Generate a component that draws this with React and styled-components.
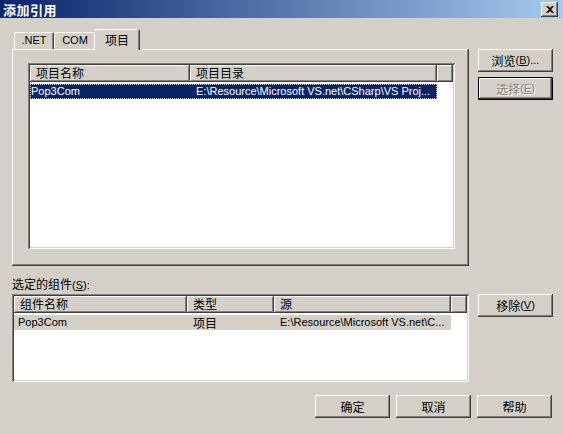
import React from "react";
import styled, { createGlobalStyle, css } from "styled-components";

const GlobalStyle = createGlobalStyle`
  html, body {
    margin: 0;
    padding: 0;
    background: #d4d0c8;
  }
  * {
    box-sizing: border-box;
  }
`;

const CJK = `"Noto Sans CJK SC", sans-serif`;
const LATIN = `"Liberation Sans", "Noto Sans CJK SC", sans-serif`;

const raised = css`
  box-shadow: inset -1px -1px #404040, inset 1px 1px #ffffff,
    inset -2px -2px #808080, inset 2px 2px #d4d0c8;
`;

const sunken = css`
  box-shadow: inset 1px 1px #808080, inset -1px -1px #ffffff,
    inset 2px 2px #404040, inset -2px -2px #d4d0c8;
`;

const Dialog = styled.div`
  width: 563px;
  height: 434px;
  background: #d4d0c8;
  font-family: ${LATIN};
  font-size: 11px;
  color: #000;
  overflow: hidden;
`;

const TitleBar = styled.div`
  height: 18px;
  display: flex;
  align-items: center;
  padding: 0 5px 0 3px;
  background: linear-gradient(to right, #0a246a, #a6caf0);
`;

const Title = styled.span`
  font-family: ${CJK};
  font-weight: bold;
  font-size: 13px;
  color: #fff;
  letter-spacing: 0.5px;
`;

const CloseBtn = styled.div`
  margin-left: auto;
  width: 17px;
  height: 15px;
  background: #d4d0c8;
  ${raised};
  display: flex;
  align-items: center;
  justify-content: center;
`;

const Body = styled.div`
  display: grid;
  grid-template-columns: 457px 75px;
  column-gap: 9px;
  padding: 12px 0 0 12px;
`;

const TabStrip = styled.div`
  height: 19px;
  display: flex;
  align-items: flex-end;
  padding-left: 2px;
  position: relative;
  z-index: 1;
`;

const Tab = styled.div`
  width: ${(p) => p.$w}px;
  height: ${(p) => (p.$active ? 21 : 17)}px;
  margin: ${(p) => (p.$active ? "0 -2px -1px -2px" : "0")};
  background: #d4d0c8;
  border-radius: 2px 2px 0 0;
  box-shadow: inset 1px 1px #ffffff, inset -1px 0 #404040, inset -2px 0 #808080;
  font-family: ${(p) => (p.$cjk ? CJK : LATIN)};
  font-size: ${(p) => (p.$cjk ? 12 : 11)}px;
  display: flex;
  justify-content: center;
  padding-top: 2px;
`;

const Panel = styled.div`
  height: 217px;
  padding: 14px 14px 17px 16px;
  ${raised};
`;

const ButtonStack = styled.div`
  display: flex;
  flex-direction: column;
  gap: 5px;
  align-self: start;
`;

const Button = styled.div`
  width: 75px;
  height: 23px;
  background: #d4d0c8;
  ${raised};
  ${(p) =>
    p.$default &&
    css`
      box-shadow: inset 0 0 0 1px #000, inset -2px -2px #404040,
        inset 2px 2px #ffffff, inset -3px -3px #808080;
    `}
  display: flex;
  align-items: center;
  justify-content: center;
  font-family: ${CJK};
  font-size: 12px;
  color: ${(p) => (p.$disabled ? "#808080" : "#000")};
  text-shadow: ${(p) => (p.$disabled ? "1px 1px #ffffff" : "none")};
  padding-bottom: 1px;
`;

const Small = styled.span`
  font-family: ${LATIN};
  font-size: 11px;
`;

const Key = styled.span`
  text-decoration: underline;
`;

const Label = styled.div`
  grid-column: 1;
  margin-top: 10px;
  margin-bottom: 2px;
  height: 16px;
  line-height: 16px;
  font-family: ${CJK};
  font-size: 12px;
`;

const ListBox = styled.div`
  height: ${(p) => p.$h}px;
  background: #fff;
  padding: 2px;
  ${sunken};
`;

const HeaderRow = styled.div`
  display: flex;
  height: 17px;
`;

const HeaderCell = styled.div`
  width: ${(p) => (p.$w ? `${p.$w}px` : "auto")};
  flex: ${(p) => (p.$w ? "none" : 1)};
  background: #d4d0c8;
  box-shadow: inset -1px -1px #404040, inset 1px 1px #ffffff,
    inset -2px -2px #808080;
  font-family: ${CJK};
  font-size: 12px;
  line-height: 16px;
  padding-left: 6px;
  white-space: nowrap;
`;

const Row = styled.div`
  display: flex;
  width: max-content;
  height: 15px;
  margin-top: 2px;
  align-items: center;
  background: ${(p) =>
    p.$focus ? "#0a246a" : p.$selected ? "#d4d0c8" : "transparent"};
  color: ${(p) => (p.$focus ? "#fff" : "#000")};
  outline: ${(p) => (p.$focus ? "1px dotted #c8c8a0" : "none")};
  outline-offset: -1px;
`;

const Cell = styled.div`
  width: ${(p) => p.$w}px;
  padding-left: ${(p) => p.$pad}px;
  white-space: nowrap;
  font-family: ${(p) => (p.$cjk ? CJK : LATIN)};
  font-size: ${(p) => (p.$cjk ? 12 : 11)}px;
  line-height: 15px;
`;

const Footer = styled.div`
  grid-column: 1 / -1;
  margin-top: 13px;
  padding-right: 1px;
  display: flex;
  justify-content: flex-end;
  gap: 6px;
`;

const projectCols = [160, 247];
const componentCols = [173, 87, 177];

function ListView({ height, cols, headers, rows }) {
  return (
    <ListBox $h={height}>
      <HeaderRow>
        {headers.map((h, i) => (
          <HeaderCell key={h} $w={cols[i]}>
            {h}
          </HeaderCell>
        ))}
        <HeaderCell />
      </HeaderRow>
      {rows.map((r, i) => (
        <Row key={i} $focus={r.focus} $selected={r.selected}>
          {r.cells.map((c, j) => (
            <Cell key={j} $w={cols[j]} $pad={j === 0 ? r.firstPad : 6} $cjk={/[\u4e00-\u9fff]/.test(c)}>
              {c}
            </Cell>
          ))}
        </Row>
      ))}
    </ListBox>
  );
}

export default function App() {
  return (
    <>
      <GlobalStyle />
      <Dialog>
        <TitleBar>
          <Title>添加引用</Title>
          <CloseBtn>
            <svg width="8" height="7" viewBox="0 0 8 7">
              <path d="M0 0h2l2 2 2-2h2L5 3.5 8 7H6L4 5 2 7H0l3-3.5z" fill="#000" />
            </svg>
          </CloseBtn>
        </TitleBar>
        <Body>
          <TabStrip>
            <Tab $w={40}>.NET</Tab>
            <Tab $w={42}>COM</Tab>
            <Tab $w={46} $active $cjk>
              项目
            </Tab>
          </TabStrip>
          <div />
          <Panel>
            <ListView
              height={186}
              cols={projectCols}
              headers={["项目名称", "项目目录"]}
              rows={[
                {
                  focus: true,
                  firstPad: 1,
                  cells: ["Pop3Com", "E:\\Resource\\Microsoft VS.net\\CSharp\\VS Proj..."],
                },
              ]}
            />
          </Panel>
          <ButtonStack>
            <Button>
              浏览<Small>
                (<Key>B</Key>)...
              </Small>
            </Button>
            <Button $disabled $default>
              选择<Small>
                (<Key>E</Key>)
              </Small>
            </Button>
          </ButtonStack>
          <Label>
            选定的组件<Small>
              (<Key>S</Key>):
            </Small>
          </Label>
          <div />
          <ListView
            height={88}
            cols={componentCols}
            headers={["组件名称", "类型", "源"]}
            rows={[
              {
                selected: true,
                firstPad: 4,
                cells: ["Pop3Com", "项目", "E:\\Resource\\Microsoft VS.net\\C..."],
              },
            ]}
          />
          <ButtonStack>
            <Button>
              移除<Small>
                (<Key>V</Key>)
              </Small>
            </Button>
          </ButtonStack>
          <Footer>
            <Button>确定</Button>
            <Button>取消</Button>
            <Button>帮助</Button>
          </Footer>
        </Body>
      </Dialog>
    </>
  );
}
